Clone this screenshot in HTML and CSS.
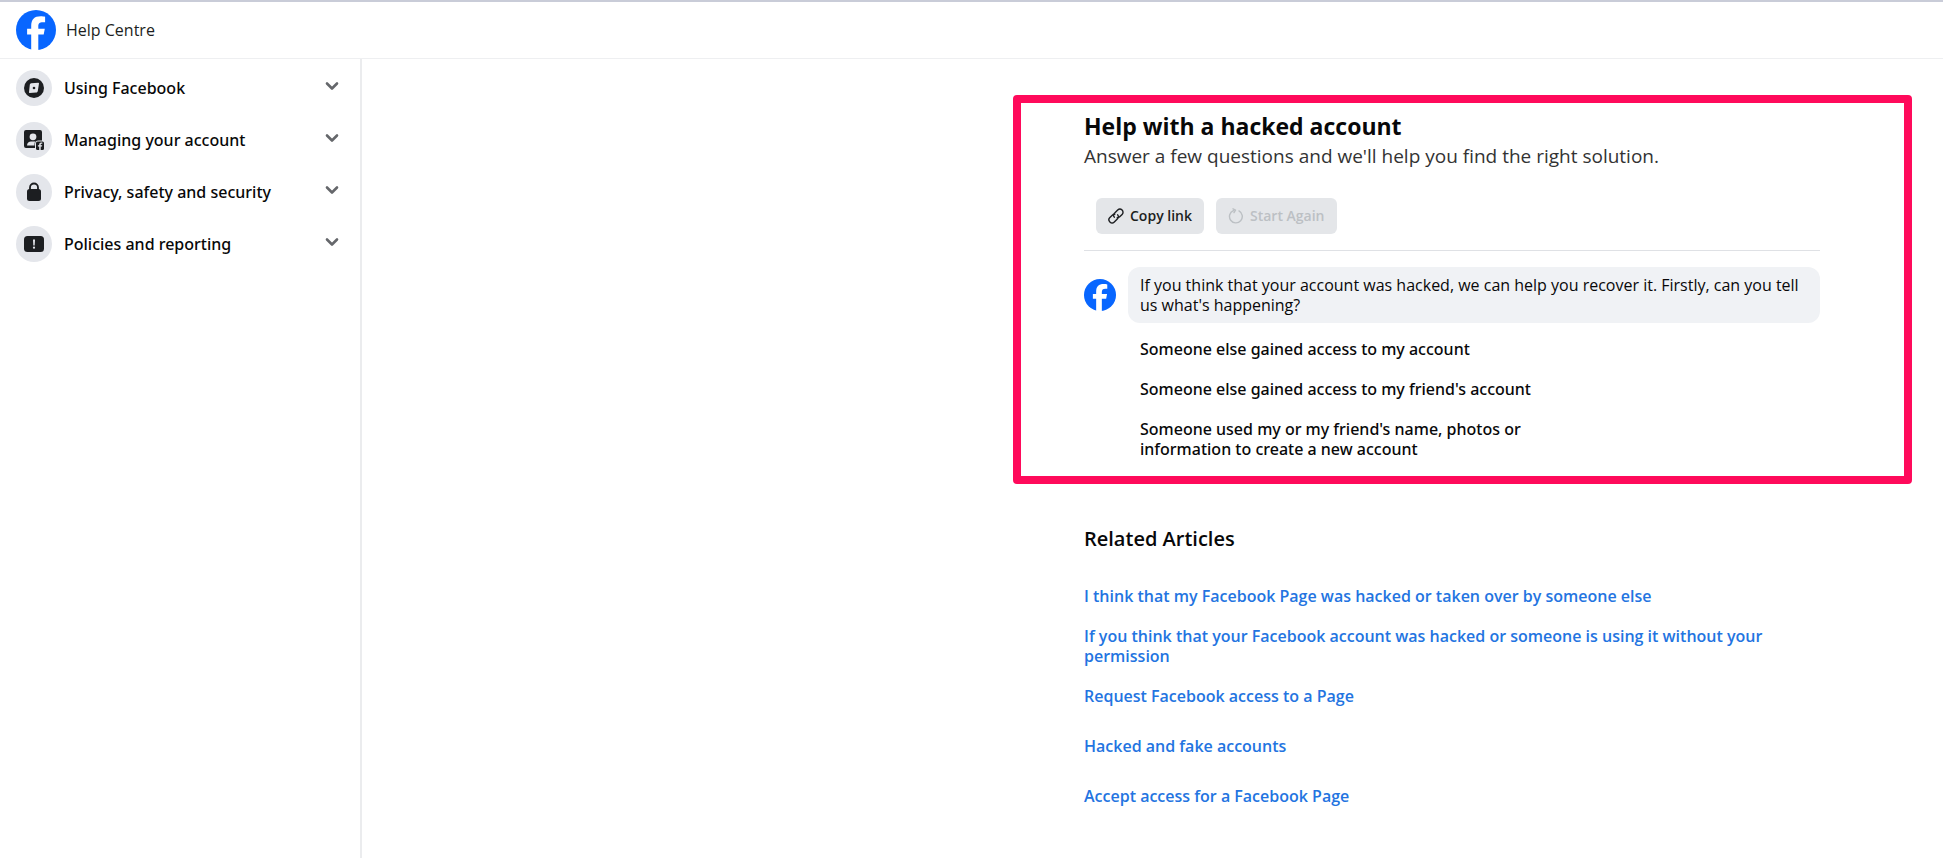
FILE: index.html
```html
<!DOCTYPE html>
<html lang="en-GB">
<head>
<meta charset="utf-8">
<title>Help Centre</title>
<link rel="stylesheet" href="styles.css">
</head>
<body>
<svg class="sprite" aria-hidden="true">
  <symbol id="logo" viewBox="0 0 40 40">
    <circle cx="20" cy="20" r="20" fill="#0866ff"/>
    <path fill="#fff" d="M15.2 40V24.600h-4.100v-5.800h4.100v-2.700c0-6.700 3-9.800 9.600-9.800 1.300 0 3.400.250 4.300.500v5.500c-.500-.050-1.300-.080-2.300-.080-3.300 0-4.500 1.200-4.500 4.400v2.200h6.500l-1.100 5.800h-5.400V40z"/>
  </symbol>
  <symbol id="chevron" viewBox="0 0 16 16">
    <path d="M3 5.500 8 10.500 13 5.500" fill="none" stroke="#65676b" stroke-width="2.600" stroke-linecap="round" stroke-linejoin="round"/>
  </symbol>
</svg>

<header class="topbar">
  <a class="brand" href="#">
    <svg class="brand-logo" role="img" aria-label="Facebook"><use href="#logo"/></svg>
    <span>Help Centre</span>
  </a>
</header>

<div class="page">
  <nav class="sidebar" aria-label="Help topics">
    <button class="topic" type="button">
      <span class="topic-icon">
        <svg viewBox="0 0 20 20"><circle cx="10" cy="10" r="10" fill="#1c1e21"/><path fill="#e4e6eb" d="M7.300 5.200 14.300 4.800c.500 0 .800.300.700.800l-1.200 7.400c-.1.900-.7 1.500-1.600 1.600l-6.500.5c-.500 0-.800-.300-.700-.800l.800-7.600c.1-.900.700-1.400 1.500-1.500z"/><circle cx="10" cy="10" r="1.300" fill="#1c1e21"/></svg>
      </span>
      <span class="topic-name">Using Facebook</span>
      <svg class="chevron"><use href="#chevron"/></svg>
    </button>
    <button class="topic" type="button">
      <span class="topic-icon">
        <svg viewBox="0 0 20 20"><path fill="#1c1e21" d="M2 0h14a2 2 0 0 1 2 2v8.500h-3.500a3.500 3.500 0 0 0-3.500 3.500v4H2a2 2 0 0 1-2-2V2a2 2 0 0 1 2-2z"/><circle cx="9" cy="6.800" r="3.400" fill="#e4e6eb"/><path fill="#e4e6eb" d="M3 15.500c0-2.800 2-4 4-4h4.500c-.6.600-1 1.500-1 2.500v1.500z"/><rect x="12" y="11.500" width="8" height="8.500" rx="1.500" fill="#1c1e21"/><path fill="#e4e6eb" d="M15.200 20v-3.400h-1.300v-1.400h1.300v-.7c0-1.400.8-2.100 2-2.100h1.100v1.300h-.7c-.7 0-.9.300-.9.900v.6h1.500l-.2 1.400h-1.300V20z"/></svg>
      </span>
      <span class="topic-name">Managing your account</span>
      <svg class="chevron"><use href="#chevron"/></svg>
    </button>
    <button class="topic" type="button">
      <span class="topic-icon">
        <svg viewBox="0 0 20 20"><rect x="3" y="7" width="14" height="12" rx="2.500" fill="#1c1e21"/><path d="M6 8V5.500a4 4 0 0 1 8 0V8" fill="none" stroke="#1c1e21" stroke-width="1.800"/></svg>
      </span>
      <span class="topic-name">Privacy, safety and security</span>
      <svg class="chevron"><use href="#chevron"/></svg>
    </button>
    <button class="topic" type="button">
      <span class="topic-icon">
        <svg viewBox="0 0 20 20"><rect y="2" width="20" height="16" rx="3.500" fill="#1c1e21"/><path fill="#e4e6eb" d="M9 5.500h2l-.3 6H9.300z"/><circle cx="10" cy="13.700" r="1.100" fill="#e4e6eb"/></svg>
      </span>
      <span class="topic-name">Policies and reporting</span>
      <svg class="chevron"><use href="#chevron"/></svg>
    </button>
  </nav>

  <main class="content">
    <section class="help">
      <h1>Help with a hacked account</h1>
      <p class="lead">Answer a few questions and we'll help you find the right solution.</p>
      <div class="actions">
        <button class="action" type="button">
          <svg viewBox="0 0 16 16" fill="none" stroke="#1c1e21" stroke-width="1.400" stroke-linecap="round" stroke-linejoin="round"><path d="M6.300 9.200A3.200 3.200 0 0 1 6.700 5l3-3a3.100 3.100 0 0 1 4.400 4.400l-2.400 2.400a3.100 3.100 0 0 1-2.500.9M9.700 6.800a3.200 3.200 0 0 1-.4 4.200l-3 3a3.100 3.100 0 0 1-4.400-4.400l2.400-2.400a3.100 3.100 0 0 1 2.500-.9"/></svg>
          Copy link
        </button>
        <button class="action" type="button" disabled>
          <svg viewBox="0 0 16 16" fill="none" stroke="#bcc0c4" stroke-width="1.400" stroke-linecap="round" stroke-linejoin="round"><path d="M11 2.900a6.400 6.400 0 1 1-5.600-.3M5 .8 7.500 2.200 6 4.600"/></svg>
          Start Again
        </button>
      </div>
      <div class="chat">
        <svg class="avatar" role="img" aria-label="Facebook"><use href="#logo"/></svg>
        <p class="bubble">If you think that your account was hacked, we can help you recover it. Firstly, can you tell us what's happening?</p>
      </div>
      <div class="options">
        <button class="option" type="button">Someone else gained access to my account</button>
        <button class="option" type="button">Someone else gained access to my friend's account</button>
        <button class="option" type="button">Someone used my or my friend's name, photos or information to create a new account</button>
      </div>
    </section>

    <section class="related">
      <h2>Related Articles</h2>
      <ul>
        <li><a href="#">I think that my Facebook Page was hacked or taken over by someone else</a></li>
        <li><a href="#">If you think that your Facebook account was hacked or someone is using it without your permission</a></li>
        <li class="spaced"><a href="#">Request Facebook access to a Page</a></li>
        <li class="spaced"><a href="#">Hacked and fake accounts</a></li>
        <li><a href="#">Accept access for a Facebook Page</a></li>
      </ul>
    </section>
  </main>
</div>
</body>
</html>
```

FILE: styles.css
```css
* {
  box-sizing: border-box;
}

body {
  margin: 0;
  min-height: 100vh;
  display: flex;
  flex-direction: column;
  background: #fff;
  color: #080809;
  font-family: "Segoe UI", "Open Sans", "Noto Sans", sans-serif;
  font-size: 16px;
  line-height: 20px;
}

h1,
h2,
p,
ul {
  margin: 0;
  padding: 0;
}

button {
  border: 0;
  background: none;
  color: inherit;
  font: inherit;
  text-align: left;
  cursor: pointer;
}

a {
  text-decoration: none;
}

svg {
  flex: none;
}

.sprite {
  position: absolute;
  width: 0;
  height: 0;
}

.topbar {
  display: flex;
  align-items: center;
  height: 59px;
  padding: 0 16px;
  border-top: 2px solid #c9ccd8;
  border-bottom: 1px solid #eeeff1;
}

.brand {
  display: flex;
  align-items: center;
  gap: 10px;
  color: #1c1e21;
}

.brand-logo {
  width: 40px;
  height: 40px;
}

.page {
  flex: 1;
  display: flex;
}

.sidebar {
  flex: none;
  width: 362px;
  padding: 3px 14px 3px 16px;
  border-right: 2px solid #ebecee;
}

.topic {
  display: flex;
  align-items: center;
  width: 100%;
  height: 52px;
  padding: 0;
}

.topic,
.option {
  font-family: "Segoe UI", "Noto Sans", "Open Sans", sans-serif;
  font-weight: 500;
}

.topic-icon {
  flex: none;
  display: grid;
  place-items: center;
  width: 36px;
  height: 36px;
  border-radius: 50%;
  background: #e4e6eb;
}

.topic-icon svg {
  width: 20px;
  height: 20px;
}

.topic-name {
  flex: 1;
  padding-left: 12px;
}

.chevron {
  width: 16px;
  height: 16px;
  margin: 0 6px 4px 0;
}

.content {
  flex: 1;
  display: flex;
  flex-direction: column;
  align-items: flex-end;
  padding: 36px 31px 0;
}

.help {
  width: 899px;
  padding: 9px 84px 17px 63px;
  border: 8px solid #ff0a5b;
  border-radius: 4px;
}

h1 {
  font-size: 23px;
  line-height: 28px;
  font-weight: 700;
}

.lead {
  padding-top: 4px;
  color: #333;
  font-size: 19px;
  line-height: 24px;
}

.actions {
  display: flex;
  gap: 12px;
  padding: 30px 12px 16px;
  border-bottom: 1px solid #dfe1e5;
}

.action {
  display: flex;
  align-items: center;
  gap: 6px;
  height: 36px;
  padding: 0 12px;
  border-radius: 6px;
  background: #e4e6e9;
  color: #1c1e21;
  font-size: 14px;
  font-weight: 600;
}

.action:disabled {
  color: #bcc0c4;
}

.action svg {
  width: 16px;
  height: 16px;
}

.chat {
  display: flex;
  align-items: center;
  gap: 12px;
  padding: 16px 0;
}

.avatar {
  width: 32px;
  height: 32px;
}

.bubble {
  flex: 1;
  padding: 8px 12px;
  border-radius: 12px;
  background: #f0f2f5;
}

.options {
  display: flex;
  flex-direction: column;
  align-items: flex-start;
  gap: 20px;
  padding-left: 56px;
}

.option {
  max-width: 440px;
  padding: 0;
}

.related {
  width: 828px;
  padding-top: 43px;
}

h2 {
  font-size: 20px;
  line-height: 24px;
  font-weight: 600;
}

.related ul {
  display: flex;
  flex-direction: column;
  gap: 20px;
  padding: 35px 92px 0 0;
  list-style: none;
}

.related a {
  color: #2374e1;
  font-weight: 600;
}

.spaced {
  padding-bottom: 10px;
}
```
